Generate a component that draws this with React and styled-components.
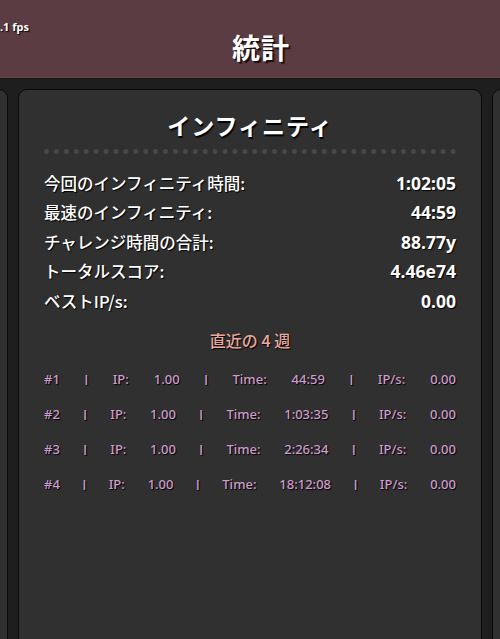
import React from 'react';
import styled, { createGlobalStyle } from 'styled-components';

const GlobalStyle = createGlobalStyle`
    html, body {
        margin: 0;
        padding: 0;
        background: #1e1e1e;
        overflow: hidden;
    }
    body {
        font-family: "Noto Sans CJK JP", "Noto Sans", sans-serif;
        color: #ffffff;
    }
`;

const stats = [
    { label: '今回のインフィニティ時間:', value: '1:02:05' },
    { label: '最速のインフィニティ:', value: '44:59' },
    { label: 'チャレンジ時間の合計:', value: '88.77y' },
    { label: 'トータルスコア:', value: '4.46e74' },
    { label: 'ベストIP/s:', value: '0.00' },
];

const recent = [
    { ip: '1.00', time: '44:59', rate: '0.00' },
    { ip: '1.00', time: '1:03:35', rate: '0.00' },
    { ip: '1.00', time: '2:26:34', rate: '0.00' },
    { ip: '1.00', time: '18:12:08', rate: '0.00' },
];

function App() {
    return (
        <>
            <GlobalStyle />
            <Page>
                <Fps>.1 fps</Fps>
                <Header>
                    <h1>統計</h1>
                </Header>
                <Panels>
                    <Panel $side />
                    <Panel>
                        <Title>インフィニティ</Title>
                        <StatList>
                            {stats.map((s) => (
                                <StatRow key={s.label}>
                                    <span>{s.label}</span>
                                    <Value>{s.value}</Value>
                                </StatRow>
                            ))}
                        </StatList>
                        <Recent>直近の 4 週</Recent>
                        {recent.map((r, i) => (
                            <RunRow key={i}>
                                <span>#{i + 1}</span>
                                <Sep>|</Sep>
                                <span>IP:</span>
                                <span>{r.ip}</span>
                                <Sep>|</Sep>
                                <span>Time:</span>
                                <span>{r.time}</span>
                                <Sep>|</Sep>
                                <span>IP/s:</span>
                                <span>{r.rate}</span>
                            </RunRow>
                        ))}
                    </Panel>
                    <Panel $side />
                </Panels>
            </Page>
        </>
    );
}

export default App;

const Page = styled.div`
    position: relative;
    width: 500px;
    height: 639px;
    overflow: hidden;
`;

const Fps = styled.div`
    position: absolute;
    left: 0;
    top: 19px;
    font-family: "Noto Sans", sans-serif;
    font-size: 11px;
    font-weight: 700;
    color: #ffffff;
    text-shadow: 1px 1px 1px #000;
`;

const Header = styled.div`
    height: 78px;
    background: #5a3c42;
    border-bottom: 1px solid #6b4249;
    box-shadow: 0 1px 0 #161616;
    display: flex;
    align-items: center;
    justify-content: center;
    padding-left: 22px;
    padding-top: 16px;
    box-sizing: border-box;

    h1 {
        margin: 0;
        font-size: 28px;
        font-weight: 700;
        letter-spacing: 1px;
        text-shadow: 2px 2px 1px #1a1012;
    }
`;

const Panels = styled.div`
    display: flex;
    justify-content: center;
    gap: 10px;
    padding-top: 11px;
`;

const Panel = styled.div`
    flex-shrink: 0;
    width: ${(p) => (p.$side ? '200px' : '464px')};
    height: 600px;
    box-sizing: border-box;
    background: #303030;
    border: 1px solid #0a0a0a;
    border-radius: 9px;
    padding: 18px 25px 0 25px;
`;

const Title = styled.div`
    font-size: 23px;
    font-weight: 700;
    text-align: center;
    letter-spacing: 1px;
    text-shadow: 1px 2px 1px #000;
    padding-bottom: 7px;
    border-bottom: 5px dotted #484848;
    margin-bottom: 14px;
`;

const StatList = styled.div`
    display: flex;
    flex-direction: column;
`;

const StatRow = styled.div`
    display: flex;
    justify-content: space-between;
    align-items: center;
    height: 29.5px;
    font-size: 16.5px;
    font-weight: 500;
    text-shadow: 1px 1px 1px #000;
`;

const Value = styled.span`
    font-family: "Noto Sans", sans-serif;
    font-size: 17.5px;
    font-weight: 700;
`;

const Recent = styled.div`
    text-align: center;
    color: #eaa89c;
    font-size: 16px;
    font-weight: 500;
    text-shadow: 1px 1px 1px #000;
    margin-top: 12px;
    margin-bottom: 10px;
`;

const RunRow = styled.div`
    display: flex;
    justify-content: space-between;
    align-items: center;
    height: 35px;
    font-family: "Noto Sans", sans-serif;
    font-size: 13px;
    font-weight: 500;
    color: #cc9ccc;
    text-shadow: 1px 1px 1px #000;
`;

const Sep = styled.span`
    font-family: "Liberation Sans", sans-serif;
    font-size: 11px;
    font-weight: 700;
    line-height: 1;
`;
